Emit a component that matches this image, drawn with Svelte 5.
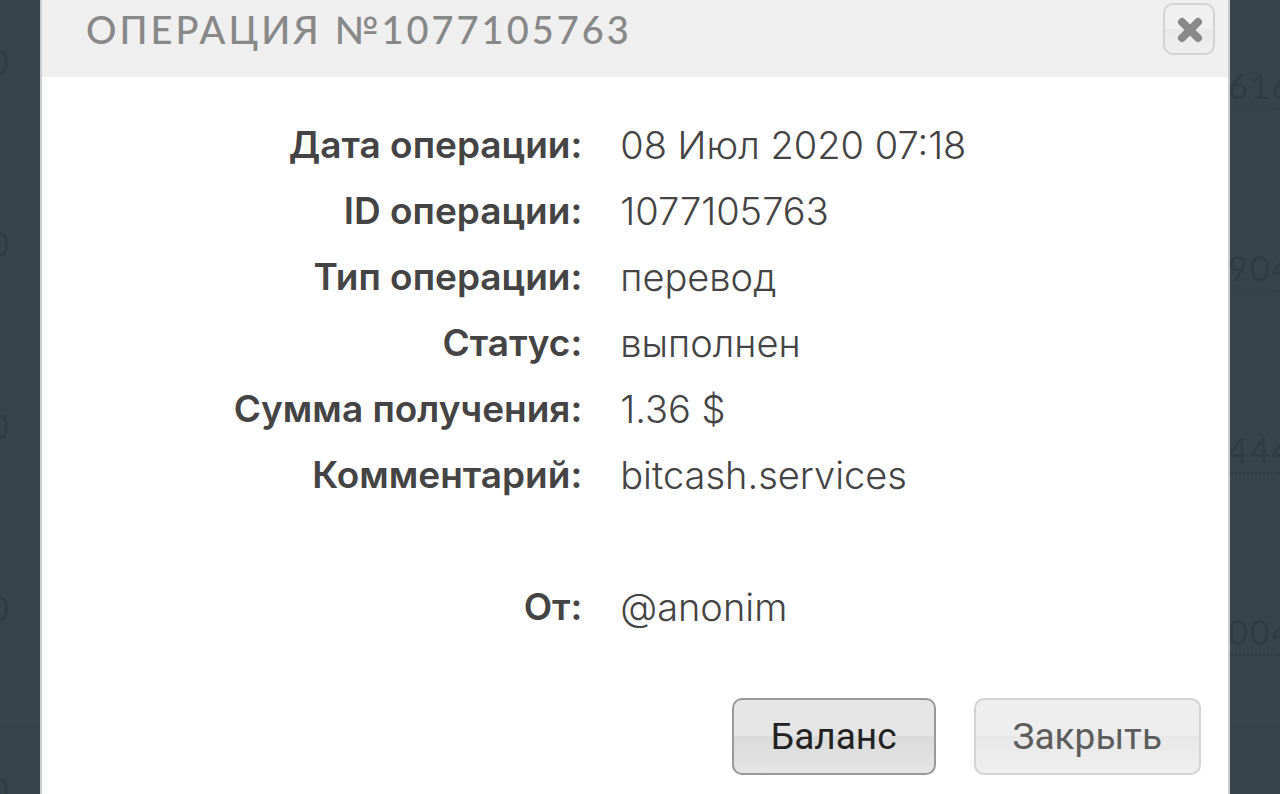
<script>
  const operationId = "1077105763"

  const details = [
    { label: "Дата операции", value: "08 Июл 2020 07:18" },
    { label: "ID операции", value: operationId },
    { label: "Тип операции", value: "перевод" },
    { label: "Статус", value: "выполнен" },
    { label: "Сумма получения", value: "1.36 $" },
    { label: "Комментарий", value: "bitcash.services" },
    { label: "От", value: "@anonim", separate: true },
  ]

  const historyRows = [
    { amount: "0", id: "616" },
    { amount: "0", id: "904" },
    { amount: "0", id: "444" },
    { amount: "0", id: "004" },
    { amount: "0", id: "" },
  ]
</script>

<div class="page">
  <div class="history" aria-hidden="true">
    {#each historyRows as row}
      <div class="history-row">
        <span class="amount">{row.amount}</span>
        {#if row.id}
          <span class="history-id">{row.id}</span>
        {/if}
      </div>
    {/each}
  </div>

  <div class="dialog" role="dialog" aria-labelledby="dialog-title">
    <header>
      <h1 id="dialog-title">ОПЕРАЦИЯ №{operationId}</h1>
      <button class="close" type="button" aria-label="Закрыть окно">
        <svg viewBox="0 0 26 26" width="26" height="26">
          <path d="M5 5 L21 21 M21 5 L5 21" />
        </svg>
      </button>
    </header>

    <dl>
      {#each details as item}
        <div class="detail" class:separate={item.separate}>
          <dt>{item.label}:</dt>
          <dd>{item.value}</dd>
        </div>
      {/each}
    </dl>

    <footer>
      <button class="action primary" type="button">Баланс</button>
      <button class="action" type="button">Закрыть</button>
    </footer>
  </div>
</div>

<style>
  :global(body) {
    background: #38444b;
  }

  .page {
    position: relative;
    min-height: 100vh;
    display: flex;
    padding: 0 50px 0 40px;
    box-sizing: border-box;
    overflow: hidden;
    font-family: Inter, "Open Sans", sans-serif;
  }

  /* dimmed list behind the dialog */
  .history {
    position: absolute;
    inset: 0;
    overflow: hidden;
    color: #303c43;
    font-family: Lato, sans-serif;
    font-size: 34px;
    line-height: 44px;
  }

  .history-row {
    display: flex;
    justify-content: space-between;
    align-items: flex-start;
    height: 182px;
    padding-top: 40px;
    box-sizing: border-box;
    border-bottom: 1px solid #364249;
  }

  .amount {
    display: flex;
    justify-content: flex-end;
    width: 9px;
    overflow: hidden;
  }

  .history-id {
    width: 52px;
    margin-top: 24px;
    overflow: hidden;
    letter-spacing: 2px;
    border-bottom: 2px dotted #303c43;
  }

  .dialog {
    position: relative;
    flex: 1;
    min-width: 0;
    background: #fff;
    border: solid #c9cdd0;
    border-width: 0 2px;
  }

  header {
    display: flex;
    justify-content: space-between;
    align-items: flex-start;
    padding: 3px 13px 22px 44px;
    background: #efefef;
  }

  h1 {
    margin: 0;
    color: #888;
    font-family: Lato, sans-serif;
    font-size: 38px;
    font-weight: 500;
    line-height: 52px;
    letter-spacing: 3px;
  }

  .close {
    display: flex;
    align-items: center;
    justify-content: center;
    width: 52px;
    height: 52px;
    padding: 0;
    background: linear-gradient(#f0f0f0 50%, #e9e9e9 50%, #efefef);
    border: 2px solid #d3d3d3;
    border-radius: 10px;
  }

  .close svg {
    margin: 2px 0 0 2px;
  }

  .close path {
    fill: none;
    stroke: #888;
    stroke-width: 8;
    stroke-linecap: round;
  }

  dl {
    margin: 0;
    padding: 35px 0 58px;
    color: #444;
    font-size: 38px;
    line-height: 66px;
  }

  .detail {
    display: grid;
    grid-template-columns: 8fr 9fr;
    column-gap: 38px;
  }

  .detail.separate {
    margin-top: 66px;
  }

  dt {
    font-size: 37px;
    font-weight: 600;
    text-align: right;
  }

  dd {
    margin: 0;
    font-weight: 300;
  }

  footer {
    display: flex;
    justify-content: flex-end;
    gap: 38px;
    padding: 0 27px 20px;
  }

  .action {
    height: 77px;
    padding: 0 37px;
    color: #5c5c5c;
    font-family: Roboto, sans-serif;
    font-size: 37px;
    background: linear-gradient(#eee 50%, #e8e8e8 50%, #efefef);
    border: 2px solid #d3d3d3;
    border-radius: 10px;
  }

  .action.primary {
    color: #222;
    background: linear-gradient(#e5e5e5 50%, #dadada 50%, #e5e5e5);
    border-color: #999;
  }
</style>
